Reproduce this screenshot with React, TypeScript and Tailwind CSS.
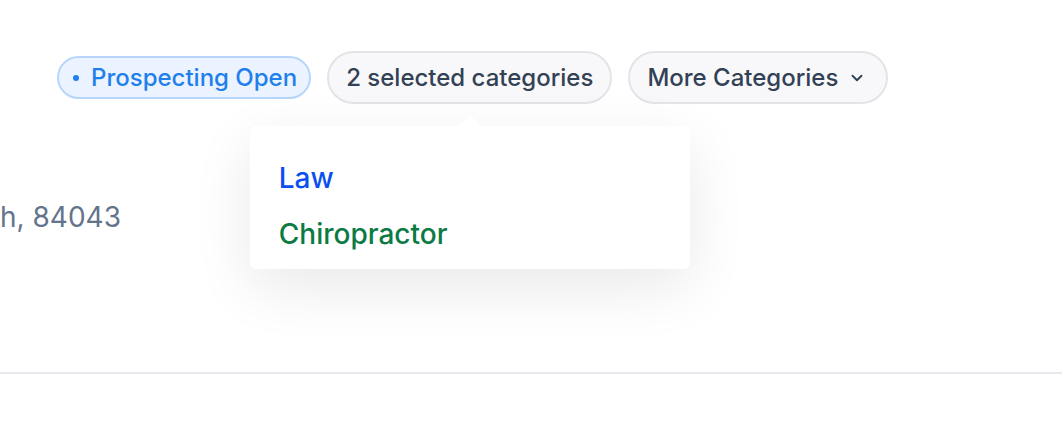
import React from 'react';
import { ChevronDown } from 'lucide-react';

const App: React.FC = () => {
  const categories = [
    { label: 'Law', color: 'text-[#0a4ff0]' },
    { label: 'Chiropractor', color: 'text-[#0b7a43]' },
  ];

  return (
    <div className="w-[1062px] h-[434px] bg-white overflow-hidden font-['Inter',sans-serif]">
      {/* Tags row */}
      <div className="flex items-center gap-[16px] pl-[57px] pt-[51px]">
        <div className="flex items-center h-[43px] pl-[14px] pr-[12px] rounded-full border-2 border-[#b8d6fc] bg-[#eaf3ff] text-[#1f7fec] text-[24px] font-medium">
          <span className="w-[6px] h-[6px] rounded-full bg-[#1f7fec] mr-[12px]"></span>
          <span>Prospecting Open</span>
        </div>

        <div className="relative">
          <button className="flex items-center h-[53px] px-[17px] rounded-full border-2 border-[#e3e4e8] bg-[#f8f8fa] text-[#334155] text-[24px] font-medium">
            2 selected categories
          </button>

          {/* Popover */}
          <div className="absolute left-1/2 -translate-x-1/2 top-[75px] w-[440px] z-10">
            <div className="absolute left-1/2 -translate-x-1/2 -top-[11px] w-0 h-0 border-l-[12px] border-r-[12px] border-b-[12px] border-l-transparent border-r-transparent border-b-white"></div>
            <div className="bg-white rounded-[6px] shadow-[0_18px_60px_rgba(0,0,0,0.09)] pl-[29px] pt-[35px] pb-[18px] flex flex-col gap-[22px]">
              {categories.map((c) => (
                <div key={c.label} className={`text-[28px] font-medium leading-[34px] ${c.color}`}>
                  {c.label}
                </div>
              ))}
            </div>
          </div>
        </div>

        <button className="flex items-center h-[53px] pl-[17px] pr-[20px] rounded-full border-2 border-[#e3e4e8] bg-[#f8f8fa] text-[#334155] text-[24px] font-medium">
          More Categories
          <ChevronDown className="ml-[10px] w-[18px] h-[18px]" strokeWidth={2.5} />
        </button>
      </div>

      {/* Address line */}
      <div className="mt-[96px] text-[28px] leading-[34px] text-[#64748b] whitespace-nowrap">
        h, 84043
      </div>

      {/* Divider */}
      <div className="mt-[138px] border-t-2 border-[#e8e8ee]"></div>
    </div>
  );
};

export default App;
